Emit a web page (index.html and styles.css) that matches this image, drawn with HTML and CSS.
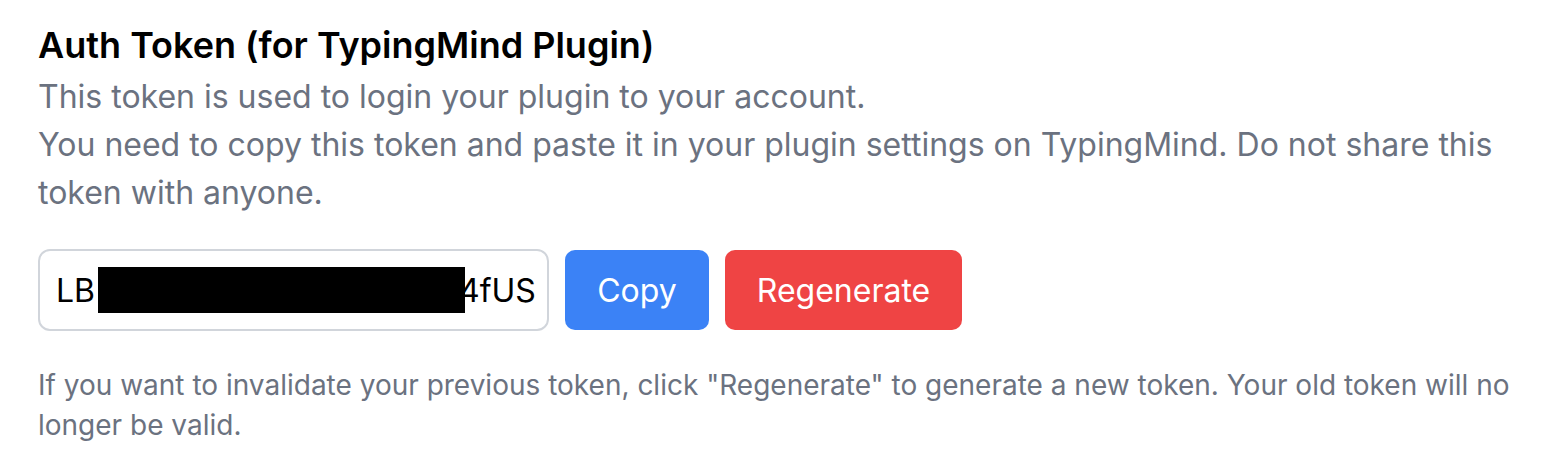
FILE: index.html
```html
<!DOCTYPE html>
<html>
<head>
<meta charset="utf-8">
<link rel="stylesheet" href="styles.css">
</head>
<body>
<div class="section">
  <h2 class="title">Auth Token (for TypingMind Plugin)</h2>
  <p class="desc">This token is used to login your plugin to your account.<br>You need to copy this token and paste it in your plugin settings on TypingMind. Do not share this token with anyone.</p>
  <div class="row">
    <div class="input"><span class="tok">LB</span><span class="redact"></span><span class="tok tail">4fUS</span></div>
    <button class="btn blue">Copy</button>
    <button class="btn red">Regenerate</button>
  </div>
  <p class="note">If you want to invalidate your previous token, click "Regenerate" to generate a new token. Your old token will no longer be valid.</p>
</div>
</body>
</html>
```
FILE: styles.css
```css
html, body { margin: 0; padding: 0; background: #fff; }
body { font-family: Inter, "Noto Sans", sans-serif; }
.section { padding: 17px 38px 0 38px; width: 1480px; }
.title { margin: 0; font-size: 36px; line-height: 56px; font-weight: 600; color: #000; }
.desc { margin: 0; font-size: 32px; line-height: 48px; color: #6b7280; width: 1470px; }
.row { display: flex; align-items: center; gap: 16px; margin-top: 32px; }
.input { width: 511px; height: 82px; box-sizing: border-box; border: 2px solid #d1d5db; border-radius: 12px; display: flex; align-items: center; padding-left: 16px; font-size: 32px; color: #000; overflow: hidden; white-space: nowrap; }
.redact { display: inline-block; width: 367px; height: 46px; background: #000; position: relative; z-index: 1; flex: none; margin-left: 3px; margin-right: -6px; }
.btn { border: none; height: 80px; border-radius: 10px; color: #fff; font-family: Inter, sans-serif; font-size: 32px; padding: 0; }
.blue { background: #3b82f6; width: 144px; }
.red { background: #ef4444; width: 237px; }
.note { margin: 34px 0 0 0; font-size: 28px; line-height: 40px; color: #6b7280; }
```
